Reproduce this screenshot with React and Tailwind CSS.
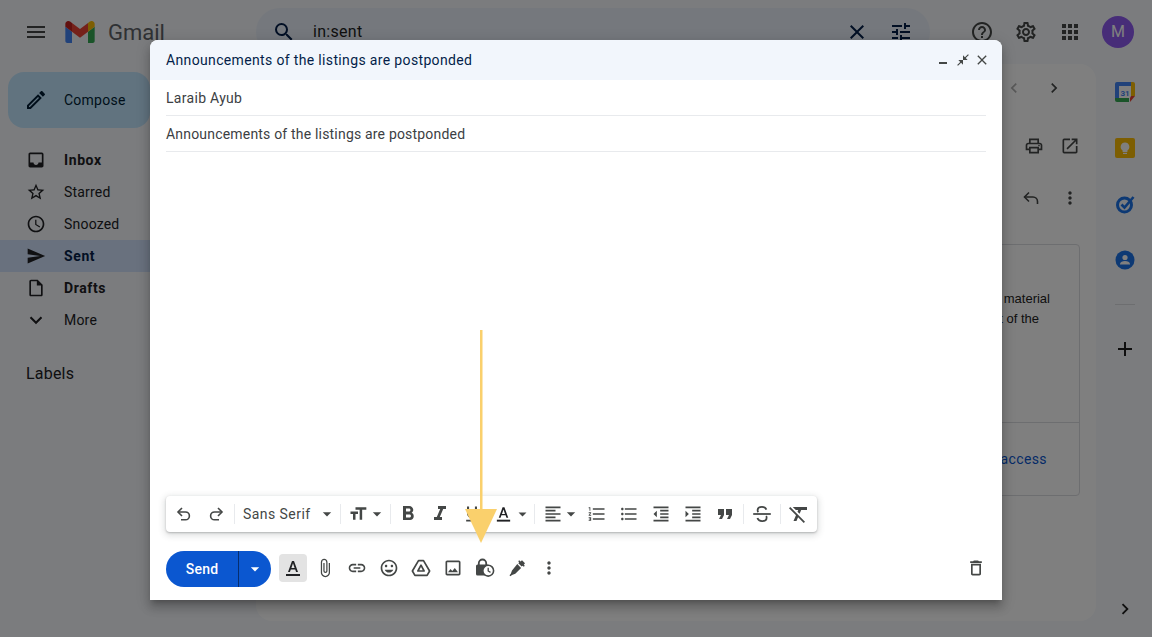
import React from "react";
import {
  MdMenu, MdSearch, MdClose, MdTune, MdHelpOutline, MdOutlineSettings, MdApps, MdOutlineCreate,
  MdInbox, MdStarBorder, MdAccessTime, MdSend, MdOutlineInsertDriveFile, MdExpandMore,
  MdChevronLeft, MdChevronRight, MdOutlinePrint, MdOpenInNew, MdMoreVert, MdAdd,
  MdFormatSize, MdFormatBold, MdFormatItalic, MdFormatUnderlined,
  MdFormatAlignLeft, MdFormatListNumbered, MdFormatListBulleted, MdFormatIndentDecrease,
  MdFormatIndentIncrease, MdFormatQuote, MdFormatClear, MdAttachFile, MdLink,
  MdOutlineInsertEmoticon, MdOutlineInsertPhoto, MdOutlineDelete, MdArrowDropDown, MdCloseFullscreen,
} from "react-icons/md";

const font = "font-['Roboto','Noto_Sans',sans-serif]";

function GmailLogo() {
  return (
    <svg viewBox="52 42 88 66" className="h-[22px] w-[30px]">
      <path fill="#4285f4" d="M58 108h14V74L52 59v43c0 3.32 2.69 6 6 6" />
      <path fill="#34a853" d="M120 108h14c3.32 0 6-2.69 6-6V59l-20 15" />
      <path fill="#fbbc04" d="M120 48v26l20-15v-8c0-7.42-8.47-11.65-14.4-7.2" />
      <path fill="#ea4335" d="M72 74V48l24 18 24-18v26L96 92" />
      <path fill="#c5221f" d="M52 51v8l20 15V48l-5.6-4.2c-5.94-4.45-14.4-.22-14.4 7.2" />
    </svg>
  );
}

function CalendarIcon() {
  return (
    <svg viewBox="0 0 20 20" className="h-5 w-5">
      <path fill="#fff" d="M4 4h12v12H4z" />
      <path fill="#4285f4" d="M2 0h14v4H4v12H0V2a2 2 0 0 1 2-2z" />
      <path fill="#fbbc04" d="M16 0h2a2 2 0 0 1 2 2v2h-4z" />
      <path fill="#fbbc04" d="M16 4h4v10h-4z" />
      <path fill="#34a853" d="M0 16h14v4H2a2 2 0 0 1-2-2z" />
      <path fill="#ea4335" d="M16 14h4l-5 6v-4z" />
      <text x="10" y="13.5" textAnchor="middle" fontSize="8" fontWeight="700" fill="#4285f4" fontFamily="Roboto">31</text>
    </svg>
  );
}

function KeepIcon() {
  return (
    <svg viewBox="0 0 20 20" className="h-5 w-5">
      <rect width="20" height="20" rx="2" fill="#fbbc04" />
      <path fill="#fff" d="M10 4.5a4.3 4.3 0 0 0-2.4 7.9V14h4.8v-1.6A4.3 4.3 0 0 0 10 4.5z" />
      <rect x="8" y="14.8" width="4" height="1.2" fill="#fff" />
    </svg>
  );
}

function TasksIcon() {
  return (
    <svg viewBox="0 0 20 20" className="h-5 w-5" fill="none">
      <circle cx="9.5" cy="11" r="7" stroke="#1a73e8" strokeWidth="3" />
      <path d="M6.5 10.5l3 3L18.5 3" stroke="#1a73e8" strokeWidth="2.6" />
    </svg>
  );
}

function ContactsIcon() {
  return (
    <svg viewBox="0 0 20 20" className="h-5 w-5">
      <circle cx="10" cy="10" r="9.5" fill="#1a73e8" />
      <circle cx="10" cy="7.5" r="2.6" fill="#fff" />
      <path fill="#fff" d="M5 14c0-2 2.6-3 5-3s5 1 5 3v.6H5z" />
    </svg>
  );
}

function DriveIcon() {
  return (
    <svg viewBox="0 0 20 20" className="h-5 w-5" fill="none" stroke="#444746" strokeWidth="1.7" strokeLinejoin="round">
      <path d="M7.5 2.6h5L18.6 13l-2.5 4.4H3.9L1.4 13z" />
      <path d="M10 7.2L13.1 13H6.9z" />
    </svg>
  );
}

function ConfidentialIcon() {
  return (
    <svg viewBox="0 0 20 20" className="h-5 w-5">
      <path d="M3.8 7V5.2a3.7 3.7 0 0 1 7.4 0V7" fill="none" stroke="#444746" strokeWidth="1.8" />
      <rect x="1" y="6.5" width="13" height="11" rx="1.6" fill="#444746" />
      <circle cx="13.2" cy="12.7" r="5.4" fill="#fff" stroke="#444746" strokeWidth="1.6" />
      <path d="M13.2 9.8v3.2l2.3 1.4" fill="none" stroke="#444746" strokeWidth="1.3" />
    </svg>
  );
}

function SignatureIcon() {
  return (
    <svg viewBox="0 0 20 20" className="h-5 w-5">
      <path fill="#444746" d="M12.2 2.2l1.3 1.3 1.5-1.2 3 3-1.2 1.5 1 1-1 1-1.2-1.1-.9.9-3.4-3.4.9-.9-1-1zM10.3 6.1l3.8 3.8-5.8 5.8-3.3 1.2-1.6 1.3-.9-.9 1.3-1.6 1.2-3.3z" />
    </svg>
  );
}

function UndoIcon({ size = 20, className = "" }) {
  return (
    <svg viewBox="0 0 20 20" width={size} height={size} className={className} fill="none" stroke="currentColor" strokeWidth="1.6">
      <path d="M8 4L4 8l4 4" />
      <path d="M4 8h7.5a3.9 3.9 0 0 1 0 7.8H7" />
    </svg>
  );
}

function RedoIcon({ size = 20, className = "" }) {
  return (
    <svg viewBox="0 0 20 20" width={size} height={size} className={className} fill="none" stroke="currentColor" strokeWidth="1.6">
      <path d="M12 4l4 4-4 4" />
      <path d="M16 8H8.5a3.9 3.9 0 0 0 0 7.8H13" />
    </svg>
  );
}

function StrikeIcon({ size = 22 }) {
  return (
    <svg viewBox="0 0 20 20" width={size} height={size} fill="none" stroke="currentColor" strokeWidth="1.6">
      <path d="M2 10h16" />
      <path d="M14 6c-.7-1.6-2.1-2.4-4-2.4-2.3 0-4 1.2-4 3 0 .7.2 1.3.7 1.8" />
      <path d="M5.8 13.6c.6 1.8 2.2 2.8 4.2 2.8 2.4 0 4.2-1.2 4.2-3.1 0-.5-.1-1-.4-1.4" />
    </svg>
  );
}

function ReplyIcon() {
  return (
    <svg viewBox="0 0 20 20" className="h-5 w-5" fill="none" stroke="currentColor" strokeWidth="1.6">
      <path d="M8 4.5L3.5 9 8 13.5" />
      <path d="M3.5 9H12c2.6 0 4.5 1.9 4.5 4.5V16" />
    </svg>
  );
}

function NavRow({ Icon, label, bold, active, iconClass = "" }) {
  return (
    <div className={`flex h-8 items-center pl-[26px] text-sm ${bold ? "font-bold tracking-[0.6px]" : "tracking-[0.2px]"} ${active ? "bg-[#d3e3fd] text-[#041e49]" : "text-[#202124]"}`}>
      <Icon size={20} className={`mr-[18px] text-[#202124] ${iconClass}`} />
      <span>{label}</span>
    </div>
  );
}

function Divider({ right = "mr-[1px]" }) {
  return <div className={`ml-[2px] h-5 w-px bg-[#e8eaed] ${right}`} />;
}

function ToolBtn({ Icon, size = 20, width = "w-8" }) {
  return (
    <div className={`flex h-8 items-center justify-center text-[#444746] ${width}`}>
      <Icon size={size} />
    </div>
  );
}

function Caret() {
  return <MdArrowDropDown size={20} className="text-[#444746]" />;
}

function FormatColorA() {
  return (
    <svg viewBox="0 0 20 20" className="h-5 w-5 text-[#202124]" fill="currentColor">
      <path d="M9 3h2l4 11h-1.9l-.9-2.6H7.8L6.9 14H5zm-.6 6.9h3.2L10 5.2z" />
      <rect x="3" y="16" width="14" height="2" />
    </svg>
  );
}

export default function App() {
  return (
    <div className={`relative h-[637px] w-[1152px] overflow-hidden bg-[#f6f8fc] ${font}`}>
      {/* gmail behind the dialog */}
      <div className="flex h-16 items-center text-[#444746]">
        <MdMenu size={24} className="ml-6" />
        <div className="ml-[17px]"><GmailLogo /></div>
        <span className="ml-[13px] text-[22px] text-[#5f6368]">Gmail</span>
        <div className="ml-[91px] flex h-12 w-[674px] items-center rounded-3xl bg-[#eaf1fb] text-[#041e49]">
          <MdSearch size={24} className="ml-4" />
          <span className="ml-[17px] text-base tracking-[0.3px] text-[#1f1f1f]">in:sent</span>
          <MdClose size={24} className="ml-auto" />
          <MdTune size={24} className="mr-[17px] ml-[20px]" />
        </div>
        <MdHelpOutline size={24} className="ml-10" />
        <MdOutlineSettings size={24} className="ml-5" />
        <MdApps size={24} className="ml-5" />
        <div className="ml-[20px] flex h-8 w-8 items-center justify-center rounded-full bg-[#8e5af0] text-base text-white">M</div>
      </div>

      <div className="flex h-[573px]">
        <div className="w-64">
          <div className="mt-2 ml-2 flex h-14 w-[142px] items-center rounded-2xl bg-[#c2e7ff] text-[#001d35]">
            <MdOutlineCreate size={24} className="ml-4" />
            <span className="ml-4 text-sm tracking-[0.25px]">Compose</span>
          </div>
          <div className="mt-4">
            <NavRow Icon={MdInbox} label="Inbox" bold />
            <NavRow Icon={MdStarBorder} label="Starred" />
            <NavRow Icon={MdAccessTime} label="Snoozed" />
            <NavRow Icon={MdSend} label="Sent" bold active />
            <NavRow Icon={MdOutlineInsertDriveFile} label="Drafts" bold />
            <NavRow Icon={MdExpandMore} label="More" iconClass="scale-125" />
          </div>
          <div className="mt-[26px] pl-[26px] text-base tracking-[0.2px] text-[#202124]">Labels</div>
        </div>

        <div className="mb-4 flex w-[840px] flex-col rounded-2xl bg-white text-[#444746]">
          <div className="flex h-12 items-center justify-end pr-8">
            <MdChevronLeft size={20} className="text-[#b0b0b0]" />
            <MdChevronRight size={20} className="ml-5" />
          </div>
          <div className="mt-[10px] flex h-12 items-center justify-end pr-4">
            <MdOutlinePrint size={20} />
            <MdOpenInNew size={20} className="ml-4" />
          </div>
          <div className="mt-[4px] flex h-12 items-center justify-end pr-4">
            <ReplyIcon />
            <MdMoreVert size={20} className="ml-[19px]" />
          </div>
          <div className="mt-[22px] mr-4 ml-4 flex h-[252px] flex-col rounded border border-[#dadce0]">
            <div className="h-[178px] border-b border-[#dadce0] pt-[44px] pr-[29px] text-right font-['Liberation_Sans',sans-serif] text-[13px] leading-5 text-[#222]">
              <div>the course material</div>
              <div className="pr-[11px]">the rest of the</div>
            </div>
            <div className="flex flex-1 items-center justify-end pr-[32px] text-sm tracking-[0.4px] text-[#0b57d0]">
              Request access
            </div>
          </div>
        </div>

        <div className="flex w-14 flex-col items-center pl-[2px] text-[#444746]">
          <div className="flex h-14 items-center"><CalendarIcon /></div>
          <div className="flex h-14 items-center"><KeepIcon /></div>
          <div className="flex h-14 items-center"><TasksIcon /></div>
          <div className="flex h-14 items-center"><ContactsIcon /></div>
          <div className="mt-4 h-px w-5 bg-[#dadce0]" />
          <MdAdd size={24} className="mt-[32px] text-[#1f1f1f]" />
          <MdChevronRight size={22} className="mt-auto mb-[17px] text-[#1f1f1f]" />
        </div>
      </div>

      {/* dim layer */}
      <div className="absolute inset-0 bg-black/50" />

      {/* compose dialog */}
      <div className="absolute top-10 left-[150px] flex h-[560px] w-[852px] flex-col rounded-t-lg bg-white shadow-[0_8px_10px_1px_rgba(0,0,0,0.14),0_3px_14px_2px_rgba(0,0,0,0.12),0_5px_5px_-3px_rgba(0,0,0,0.2)]">
        <div className="flex h-10 items-center rounded-t-lg bg-[#f2f6fc] pr-[12px] pl-4 text-sm tracking-[0.35px] text-[#041e49]">
          <span>Announcements of the listings are postponded</span>
          <div className="ml-auto flex items-center text-[#444746]">
            <div className="mt-[5px] h-[2px] w-2 bg-[#444746]" />
            <MdCloseFullscreen size={14} className="ml-[9px]" />
            <MdClose size={16} className="ml-[4px]" />
          </div>
        </div>
        <div className="mx-4 flex h-9 items-center border-b border-[#e8eaed] text-sm tracking-[0.3px] text-[#3c4043]">Laraib Ayub</div>
        <div className="mx-4 flex h-9 items-center border-b border-[#e8eaed] text-sm tracking-[0.19px] text-[#3c4043]">Announcements of the listings are postponded</div>

        <div className="flex-1" />

        <div className="mb-[19px] ml-4 flex h-9 w-[651px] items-center rounded-sm bg-white pl-[2px] shadow-[0_1px_2px_rgba(60,64,67,0.3),0_2px_6px_2px_rgba(60,64,67,0.15)]">
          <ToolBtn Icon={UndoIcon} />
          <ToolBtn Icon={RedoIcon} />
          <Divider />
          <div className="flex w-[102px] items-center pl-[7px] text-sm tracking-[0.45px] text-[#444746]">
            <span>Sans Serif</span>
            <span className="ml-[6px]"><Caret /></span>
          </div>
          <Divider />
          <div className="flex w-[46px] items-center pl-[6px]">
            <MdFormatSize size={20} className="text-[#444746]" />
            <span className="ml-[-1px]"><Caret /></span>
          </div>
          <Divider />
          <ToolBtn Icon={MdFormatBold} size={24} />
          <ToolBtn Icon={MdFormatItalic} size={24} />
          <ToolBtn Icon={MdFormatUnderlined} />
          <div className="flex w-[44px] items-center pl-[6px] text-[#444746]">
            <FormatColorA />
            <Caret />
          </div>
          <Divider />
          <div className="flex w-[45px] items-center pl-[7px]">
            <MdFormatAlignLeft size={20} className="text-[#444746]" />
            <span className="ml-[-2px]"><Caret /></span>
          </div>
          <ToolBtn Icon={MdFormatListNumbered} />
          <ToolBtn Icon={MdFormatListBulleted} />
          <ToolBtn Icon={MdFormatIndentDecrease} />
          <ToolBtn Icon={MdFormatIndentIncrease} />
          <ToolBtn Icon={MdFormatQuote} size={24} />
          <Divider right="mr-[2px]" />
          <ToolBtn Icon={StrikeIcon} size={22} />
          <Divider right="mr-[2px]" />
          <ToolBtn Icon={MdFormatClear} size={24} />
        </div>

        <div className="mb-[13px] flex h-9 items-center pr-4 pl-4">
          <div className="flex h-9 w-[105px] items-center rounded-full bg-[#0b57d0] text-white">
            <span className="flex h-full w-[73px] items-center justify-center border-r border-[#062e6f] text-sm font-medium tracking-[0.25px]">Send</span>
            <div className="flex flex-1 items-center justify-center"><MdArrowDropDown size={20} /></div>
          </div>
          <div className="mb-[2px] ml-2 flex h-7 w-7 items-center justify-center rounded-sm bg-[#e3e3e3]"><FormatColorA /></div>
          <div className="mb-[2px] flex items-center pl-[2px] text-[#444746]">
            <ToolBtn Icon={MdAttachFile} />
            <ToolBtn Icon={MdLink} />
            <ToolBtn Icon={MdOutlineInsertEmoticon} />
            <ToolBtn Icon={DriveIcon} />
            <ToolBtn Icon={MdOutlineInsertPhoto} />
            <ToolBtn Icon={ConfidentialIcon} />
            <ToolBtn Icon={SignatureIcon} />
            <ToolBtn Icon={MdMoreVert} />
          </div>
          <MdOutlineDelete size={20} className="mb-[2px] ml-auto text-[#444746]" />
        </div>
      </div>

      {/* annotation arrow */}
      <svg className="absolute top-[330px] left-[465px] h-[214px] w-8" viewBox="0 0 32 214">
        <rect x="15" y="0" width="2.5" height="180" fill="#fad06c" />
        <path d="M0 179h32l-16 34z" fill="#fad06c" />
      </svg>
    </div>
  );
}
